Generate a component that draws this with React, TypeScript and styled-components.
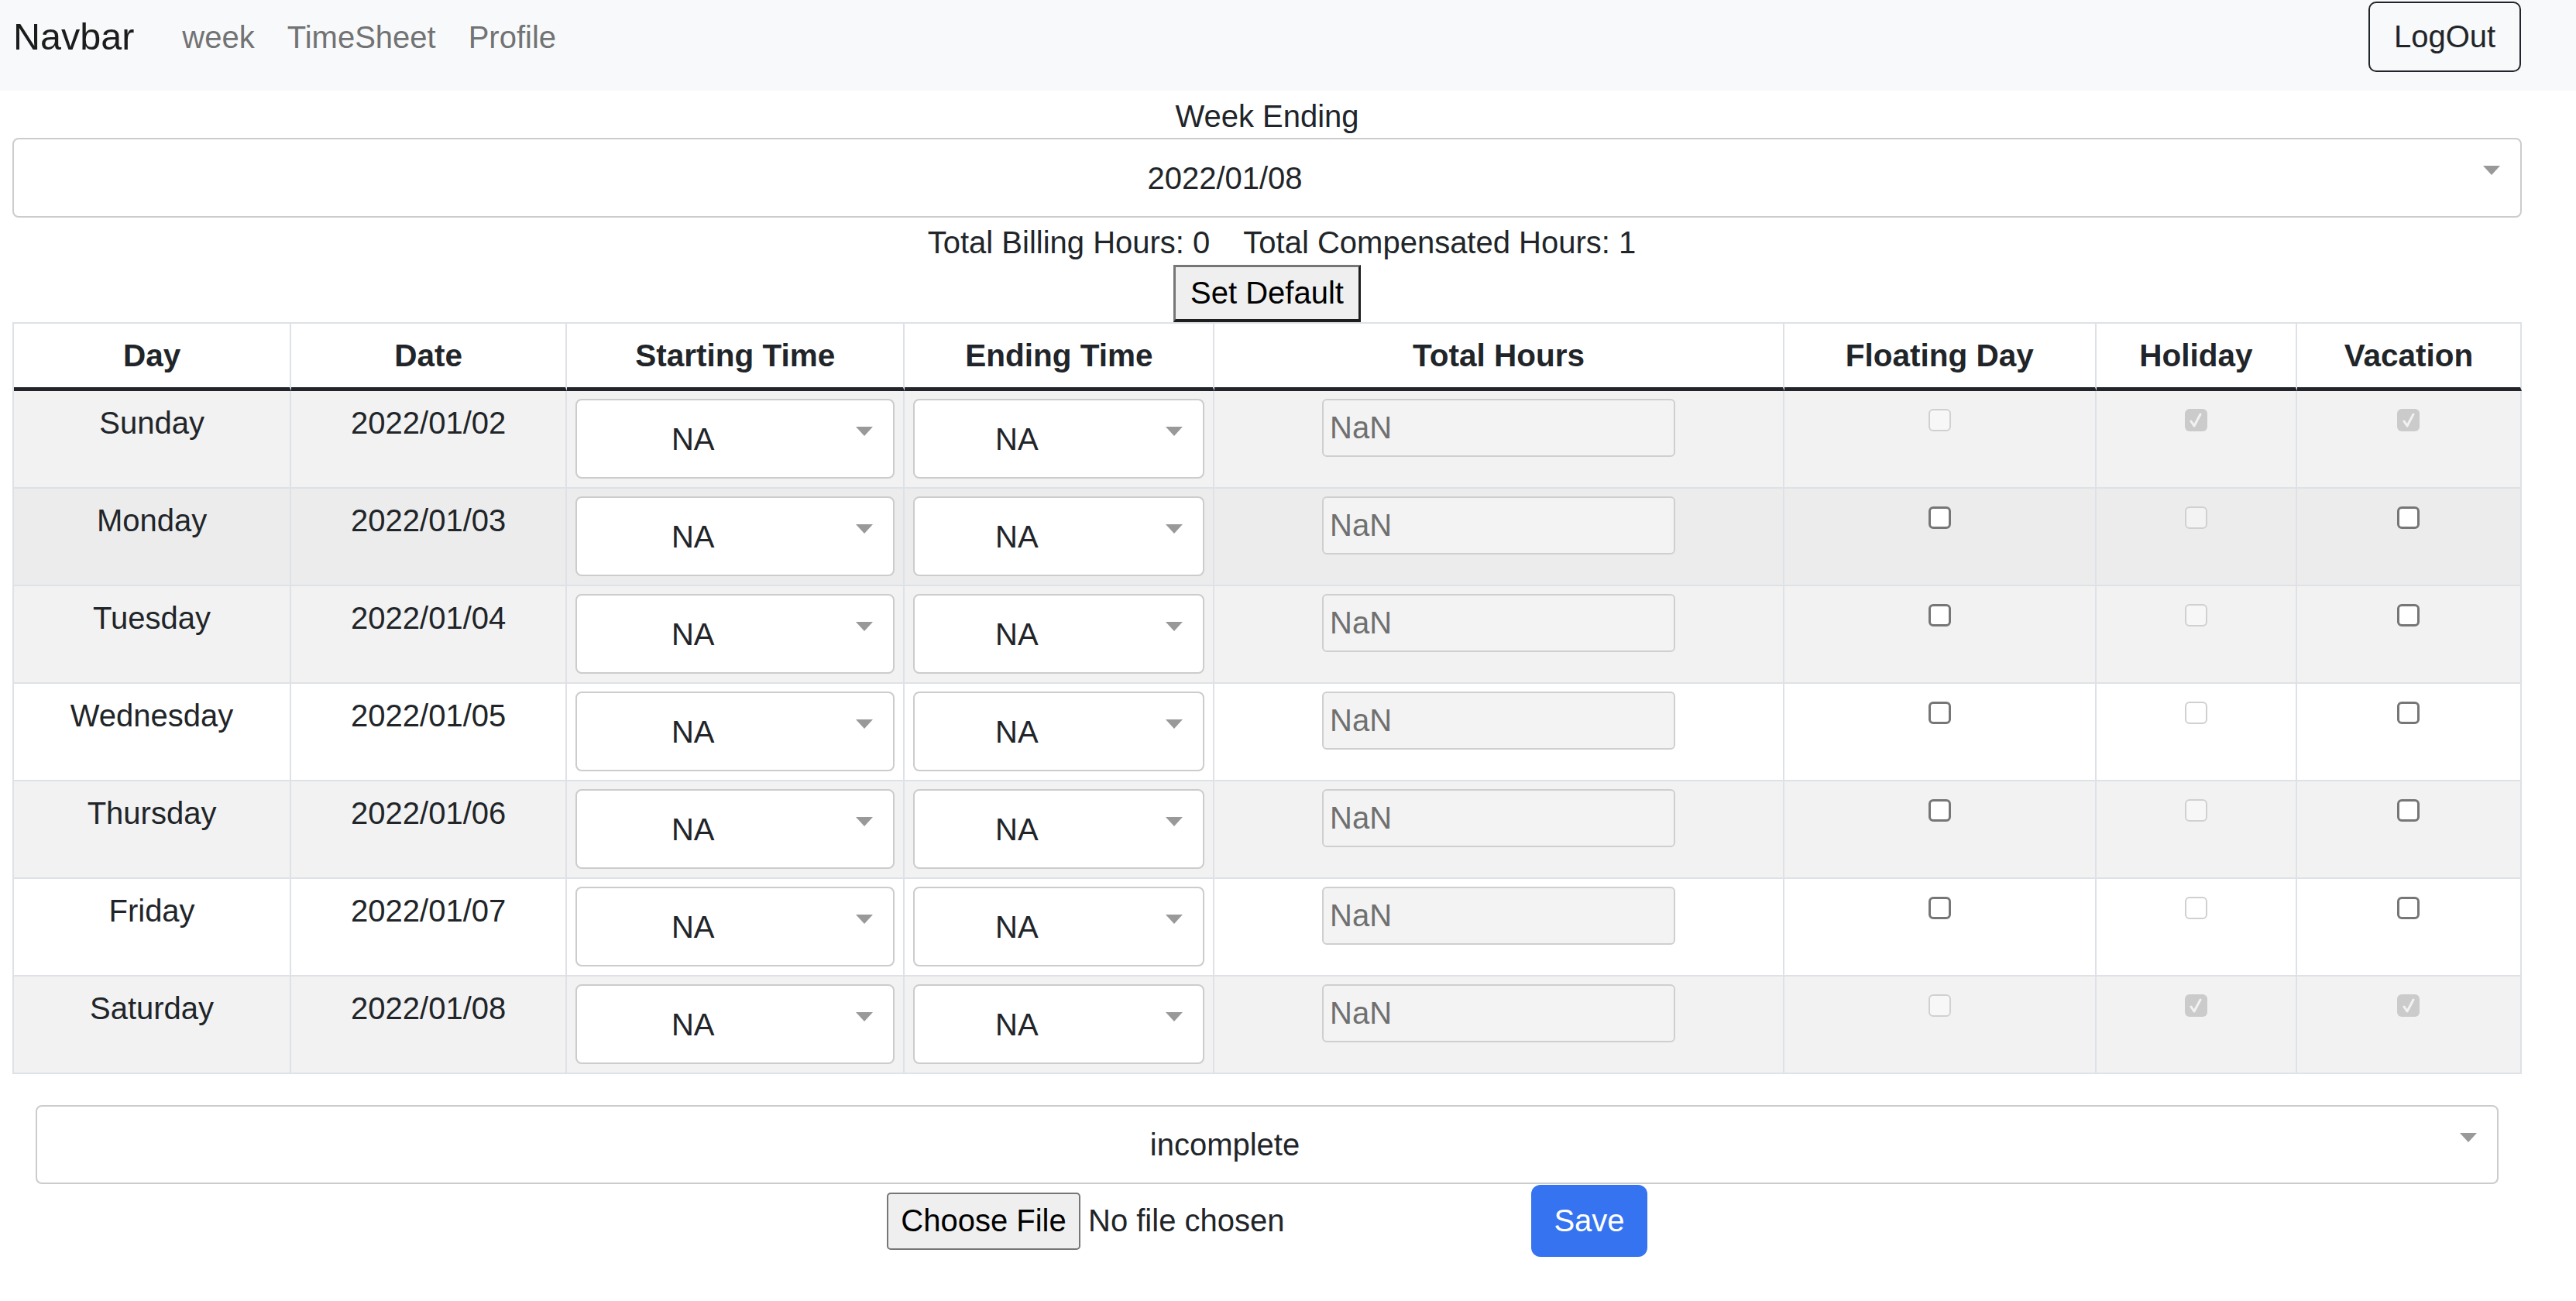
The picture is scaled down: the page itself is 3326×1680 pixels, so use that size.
import React from "react";
import styled, { createGlobalStyle } from "styled-components";

const GlobalStyle = createGlobalStyle`
  html, body { margin: 0; padding: 0; background: #ffffff; }
  body {
    font-family: "Liberation Sans", Arial, Helvetica, sans-serif;
    font-size: 40px;
    color: #212529;
  }
  * { box-sizing: border-box; }
`;

const Page = styled.div`
  width: 3326px;
  min-height: 1680px;
`;

const NavBar = styled.nav`
  display: flex;
  align-items: center;
  height: 117px;
  padding: 2px 71px 24px 17px;
  background: #f8f9fa;
`;

const Brand = styled.a`
  font-size: 48.5px;
  line-height: 1.2;
  color: #1c1c1d;
  margin-right: 41px;
  text-decoration: none;
`;

const NavLinks = styled.div`
  display: flex;
  flex: 1;
`;

const NavLink = styled.a`
  padding: 0 21px;
  font-size: 40px;
  line-height: 1.5;
  color: #727374;
  text-decoration: none;
`;

const LogOutButton = styled.button`
  width: 197px;
  height: 91px;
  border: 2px solid #212529;
  border-radius: 10px;
  background: transparent;
  font-family: inherit;
  font-size: 40px;
  color: #212529;
  padding: 0;
`;

const Main = styled.main`
  padding: 0 70px 0 16px;
`;

const Label = styled.div`
  text-align: center;
  padding-top: 5px;
  line-height: 56px;
`;

const SelectBox = styled.div<{ $inset?: number; $height?: number }>`
  display: flex;
  align-items: flex-start;
  height: ${(p) => p.$height ?? 103}px;
  margin: 0 ${(p) => p.$inset ?? 0}px;
  padding: 0 26px 0 20px;
  border: 2px solid #cccccc;
  border-radius: 8px;
  background: #ffffff;
`;

const SelectValue = styled.span`
  flex: 1;
  align-self: center;
  text-align: center;
  line-height: 1;
  color: #212529;
  white-space: nowrap;
`;

const Caret = styled.span`
  width: 0;
  height: 0;
  margin-top: 34px;
  margin-left: 81px;
  border-left: 11.5px solid transparent;
  border-right: 11.5px solid transparent;
  border-top: 12px solid #999999;
`;

const Totals = styled.div`
  display: flex;
  justify-content: center;
  gap: 43px;
  margin-top: 4px;
  padding-left: 38px;
  line-height: 56px;
`;

const DefaultRow = styled.div`
  display: flex;
  justify-content: center;
  margin-top: 1px;
`;

const SetDefaultButton = styled.button`
  height: 74px;
  padding: 0 19px;
  background: #efefef;
  border-style: solid;
  border-width: 3px 3px 4px 3px;
  border-color: #767676 #1e1e1e #1e1e1e #767676;
  font-family: inherit;
  font-size: 40px;
  color: #000000;
`;

const Table = styled.table`
  width: 3240px;
  table-layout: fixed;
  border-collapse: separate;
  border-spacing: 0;
  border-top: 2px solid #dee2e6;
  border-left: 2px solid #dee2e6;
`;

const HeadCell = styled.th<{ $w: number }>`
  width: ${(p) => p.$w}px;
  height: 87px;
  padding: 0 8px;
  font-weight: 700;
  font-size: 40.5px;
  line-height: 1.2;
  text-align: center;
  vertical-align: middle;
  color: #212529;
  background: #ffffff;
  border-right: 2px solid #dee2e6;
  border-bottom: 5px solid #212529;
`;

const BodyRow = styled.tr<{ $bg: string }>`
  background: ${(p) => p.$bg};
`;

const Cell = styled.td`
  height: 126px;
  padding: 10px 11px 11px;
  text-align: center;
  vertical-align: top;
  line-height: 63px;
  border-right: 2px solid #dee2e6;
  border-bottom: 2px solid #dee2e6;
`;

const HoursInput = styled.input`
  display: block;
  width: 456px;
  height: 75px;
  margin: 0 auto;
  padding: 0 8px;
  border: 2px solid #cfcfcf;
  border-radius: 6px;
  background: #f3f3f3;
  font-family: inherit;
  font-size: 40px;
  color: #707070;
  -webkit-text-fill-color: #707070;
  opacity: 1;
`;

const Check = styled.span<{ $kind: "on" | "off" | "checked" }>`
  display: flex;
  align-items: center;
  justify-content: center;
  width: 29px;
  height: 29px;
  margin: 13px auto 0;
  border-radius: 6px;
  border: ${(p) =>
    p.$kind === "on" ? "3px solid #767676" : p.$kind === "off" ? "2px solid #d0d0d0" : "none"};
  background: ${(p) =>
    p.$kind === "on" ? "#ffffff" : p.$kind === "off" ? "rgba(255,255,255,0.4)" : "#cbcbcb"};
`;

const StatusWrap = styled.div`
  margin-top: 40px;
`;

const FileRow = styled.div`
  display: flex;
  justify-content: center;
  align-items: center;
  gap: 32px;
  margin-top: 1px;
`;

const FileBox = styled.div`
  display: flex;
  align-items: center;
  width: 800px;
`;

const ChooseButton = styled.button`
  width: 250px;
  height: 74px;
  padding: 0;
  background: #efefef;
  border: 2px solid #767676;
  border-radius: 5px;
  font-family: inherit;
  font-size: 40px;
  color: #000000;
`;

const FileName = styled.span`
  margin-left: 10px;
  color: #212529;
  white-space: nowrap;
`;

const SaveButton = styled.button`
  width: 150px;
  height: 93px;
  padding: 0;
  background: #3573f1;
  border: none;
  border-radius: 12px;
  font-family: inherit;
  font-size: 40px;
  color: #ffffff;
`;

const Select = ({ value, inset, height }: { value: string; inset?: number; height?: number }) => (
  <SelectBox $inset={inset} $height={height}>
    <SelectValue>{value}</SelectValue>
    <Caret />
  </SelectBox>
);

const CheckBox = ({ kind }: { kind: "on" | "off" | "checked" }) => (
  <Check $kind={kind}>
    {kind === "checked" && (
      <svg width="16" height="20" viewBox="0 0 16 20">
        <polyline points="2,11 6,17 14,2" fill="none" stroke="#f2f2f2" strokeWidth="3" strokeLinejoin="round" strokeLinecap="round" />
      </svg>
    )}
  </Check>
);

const columns: { title: string; w: number }[] = [
  { title: "Day", w: 358 },
  { title: "Date", w: 356 },
  { title: "Starting Time", w: 436 },
  { title: "Ending Time", w: 400 },
  { title: "Total Hours", w: 735 },
  { title: "Floating Day", w: 403 },
  { title: "Holiday", w: 259 },
  { title: "Vacation", w: 290 },
];

const days = [
  { day: "Sunday", date: "2022/01/02", weekend: true },
  { day: "Monday", date: "2022/01/03", weekend: false },
  { day: "Tuesday", date: "2022/01/04", weekend: false },
  { day: "Wednesday", date: "2022/01/05", weekend: false },
  { day: "Thursday", date: "2022/01/06", weekend: false },
  { day: "Friday", date: "2022/01/07", weekend: false },
  { day: "Saturday", date: "2022/01/08", weekend: true },
];

const rowBg = (i: number) => (i === 1 ? "#ececec" : i % 2 === 0 ? "#f2f2f2" : "#ffffff");

export default function App() {
  return (
    <Page>
      <GlobalStyle />
      <NavBar>
        <Brand>Navbar</Brand>
        <NavLinks>
          <NavLink>week</NavLink>
          <NavLink>TimeSheet</NavLink>
          <NavLink>Profile</NavLink>
        </NavLinks>
        <LogOutButton>LogOut</LogOutButton>
      </NavBar>
      <Main>
        <Label>Week Ending</Label>
        <Select value="2022/01/08" />
        <Totals>
          <span>Total Billing Hours: 0</span>
          <span>Total Compensated Hours: 1</span>
        </Totals>
        <DefaultRow>
          <SetDefaultButton>Set Default</SetDefaultButton>
        </DefaultRow>
        <Table>
          <thead>
            <tr>
              {columns.map((c) => (
                <HeadCell key={c.title} $w={c.w}>
                  {c.title}
                </HeadCell>
              ))}
            </tr>
          </thead>
          <tbody>
            {days.map((d, i) => (
              <BodyRow key={d.day} $bg={rowBg(i)}>
                <Cell>{d.day}</Cell>
                <Cell>{d.date}</Cell>
                <Cell>
                  <Select value="NA" />
                </Cell>
                <Cell>
                  <Select value="NA" />
                </Cell>
                <Cell>
                  <HoursInput disabled readOnly value="NaN" />
                </Cell>
                <Cell>
                  <CheckBox kind={d.weekend ? "off" : "on"} />
                </Cell>
                <Cell>
                  <CheckBox kind={d.weekend ? "checked" : "off"} />
                </Cell>
                <Cell>
                  <CheckBox kind={d.weekend ? "checked" : "on"} />
                </Cell>
              </BodyRow>
            ))}
          </tbody>
        </Table>
        <StatusWrap>
          <Select value="incomplete" inset={30} height={102} />
        </StatusWrap>
        <FileRow>
          <FileBox>
            <ChooseButton>Choose File</ChooseButton>
            <FileName>No file chosen</FileName>
          </FileBox>
          <SaveButton>Save</SaveButton>
        </FileRow>
      </Main>
    </Page>
  );
}
